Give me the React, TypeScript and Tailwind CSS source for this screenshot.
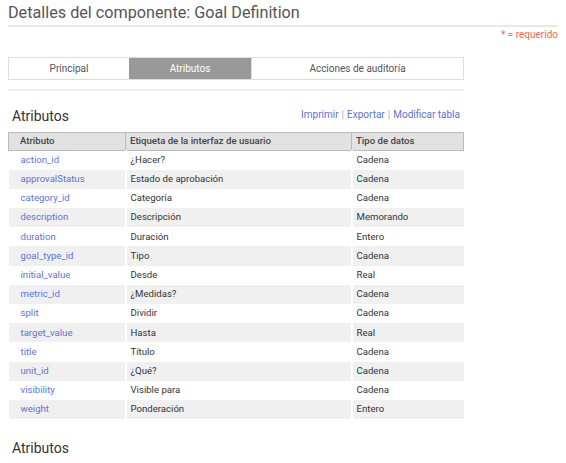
import React from "react";

const rows: [string, string, string][] = [
  ["action_id", "¿Hacer?", "Cadena"],
  ["approvalStatus", "Estado de aprobación", "Cadena"],
  ["category_id", "Categoría", "Cadena"],
  ["description", "Descripción", "Memorando"],
  ["duration", "Duración", "Entero"],
  ["goal_type_id", "Tipo", "Cadena"],
  ["initial_value", "Desde", "Real"],
  ["metric_id", "¿Medidas?", "Cadena"],
  ["split", "Dividir", "Cadena"],
  ["target_value", "Hasta", "Real"],
  ["title", "Título", "Cadena"],
  ["unit_id", "¿Qué?", "Cadena"],
  ["visibility", "Visible para", "Cadena"],
  ["weight", "Ponderación", "Entero"],
];

export default function App() {
  return (
    <div className="h-[463px] w-[566px] overflow-hidden bg-white font-['Roboto',sans-serif] text-[#333]">
      <div className="px-2 pt-[3px]">
        <h1 className="border-b-2 border-[#e8e8e8] pb-[3px] text-[16.2px] leading-[19px] text-[#555]">
          Detalles del componente: Goal Definition
        </h1>
        <div className="mt-[2px] text-right text-[10px] leading-[12px] text-[#f26a4b]">* = requerido</div>

        <div className="w-[456px]">
          <div className="mt-[16px] flex h-[23px] border border-[#ddd] text-[10px]">
            <div className="flex w-[120px] items-center justify-center text-[#555]">Principal</div>
            <div className="flex w-[122px] items-center justify-center bg-[#999] text-white">Atributos</div>
            <div className="flex flex-1 items-center justify-center border-l border-[#ddd] text-[#555]">
              Acciones de auditoría
            </div>
          </div>
          <div className="mt-[9px] border-t-2 border-[#eee]" />

          <div className="mt-[17px] flex items-end justify-between px-1">
            <h2 className="text-[14px] leading-[16px] text-[#333]">Atributos</h2>
            <div className="mb-[3px] text-[10px] leading-[12px] text-[#5b73dc]">
              <span>Imprimir</span>
              <span className="mx-[3px] text-[#aab]">|</span>
              <span>Exportar</span>
              <span className="mx-[3px] text-[#aab]">|</span>
              <span>Modificar tabla</span>
            </div>
          </div>

          <table className="mt-[8px] w-full border-collapse text-[9.6px]">
            <thead>
              <tr className="h-[18px] bg-[#e2e2e2] text-left text-[#444]">
                <th className="w-[117px] border border-[#bbb] px-[11px] font-medium">Atributo</th>
                <th className="w-[226px] border border-[#bbb] px-[4px] font-medium">Etiqueta de la interfaz de usuario</th>
                <th className="border border-[#bbb] px-[4px] font-medium">Tipo de datos</th>
              </tr>
            </thead>
            <tbody>
              {rows.map(([a, b, c], i) => (
                <tr key={a} className={i % 2 === 1 ? "h-[19.2px] bg-[#f0f0f0]" : "h-[19.2px] bg-white"}>
                  <td className="border-r-2 border-white px-[12px] text-[#5b73dc]">{a}</td>
                  <td className="border-r-2 border-white px-[4px]">{b}</td>
                  <td className="px-[4px]">{c}</td>
                </tr>
              ))}
            </tbody>
          </table>

          <h2 className="mt-[21px] px-1 text-[14px] leading-[16px] text-[#333]">Atributos</h2>
          <div className="mt-[9px] border-t border-[#eee]" />
        </div>
      </div>
    </div>
  );
}
